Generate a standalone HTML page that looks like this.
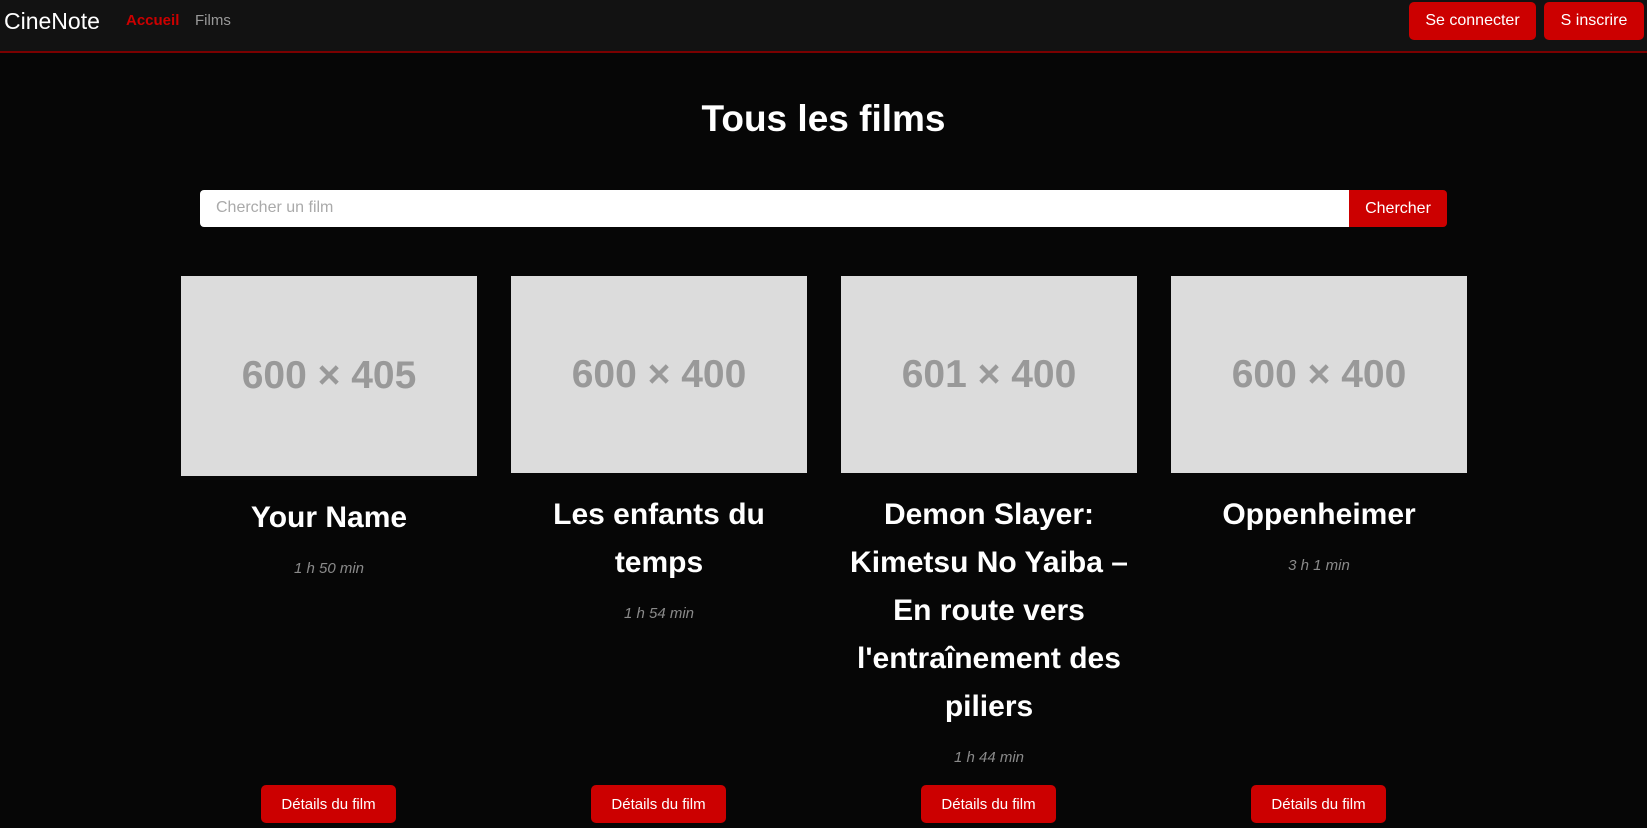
<!DOCTYPE html>
<html><head><meta charset="utf-8"><style>
*{box-sizing:border-box;margin:0;padding:0}
body{width:1647px;height:828px;overflow:hidden;background:#060606;font-family:"Liberation Sans",sans-serif;color:#fff;position:relative}
.nav{position:absolute;left:0;top:0;width:1647px;height:53px;background:#121212;border-bottom:2px solid #7a0000}
.brand{position:absolute;left:4px;top:8px;font-size:23px;color:#fff}
.nl{position:absolute;top:12px;font-size:15px}
.btn{position:absolute;background:#cc0000;color:#fff;border-radius:5px;font-size:16px;display:flex;align-items:center;justify-content:center}
h1{position:absolute;left:0;width:1647px;top:98px;text-align:center;font-size:37px;font-weight:bold}
.search{position:absolute;left:200px;top:190px;width:1149px;height:37px;background:#fff;border-radius:4px 0 0 4px;color:#aaa;font-size:16px;padding:9px 16px}
.card{position:absolute;top:276px;width:296px;text-align:center}
.img{background:#dcdcdc;color:#999;font-size:39px;font-weight:bold;display:flex;align-items:center;justify-content:center}
.t{font-size:30px;font-weight:bold;line-height:48px;margin-top:18px}
.d{font-style:italic;color:#8a8a8a;font-size:15px;margin-top:18px}
</style></head><body>
<div class="nav">
<div class="brand">CineNote</div>
<div class="nl" style="left:126px;color:#cc0000;font-weight:bold">Accueil</div>
<div class="nl" style="left:195px;color:#999">Films</div>
<div class="btn" style="left:1409px;top:2px;width:127px;height:38px">Se connecter</div>
<div class="btn" style="left:1544px;top:2px;width:100px;height:38px">S inscrire</div>
</div>
<h1>Tous les films</h1>
<div class="search">Chercher un film</div>
<div class="btn" style="left:1349px;top:190px;width:98px;height:37px;border-radius:0 4px 4px 0">Chercher</div>

<div class="card" style="left:181px"><div class="img" style="height:200px">600 × 405</div><div class="t">Your Name</div><div class="d">1 h 50 min</div></div>
<div class="card" style="left:511px"><div class="img" style="height:197px">600 × 400</div><div class="t">Les enfants du<br>temps</div><div class="d">1 h 54 min</div></div>
<div class="card" style="left:841px"><div class="img" style="height:197px">601 × 400</div><div class="t">Demon Slayer:<br>Kimetsu No Yaiba –<br>En route vers<br>l'entraînement des<br>piliers</div><div class="d">1 h 44 min</div></div>
<div class="card" style="left:1171px"><div class="img" style="height:197px">600 × 400</div><div class="t">Oppenheimer</div><div class="d">3 h 1 min</div></div>

<div class="btn" style="left:261px;top:785px;width:135px;height:38px;font-size:15px">Détails du film</div>
<div class="btn" style="left:591px;top:785px;width:135px;height:38px;font-size:15px">Détails du film</div>
<div class="btn" style="left:921px;top:785px;width:135px;height:38px;font-size:15px">Détails du film</div>
<div class="btn" style="left:1251px;top:785px;width:135px;height:38px;font-size:15px">Détails du film</div>
</body></html>
